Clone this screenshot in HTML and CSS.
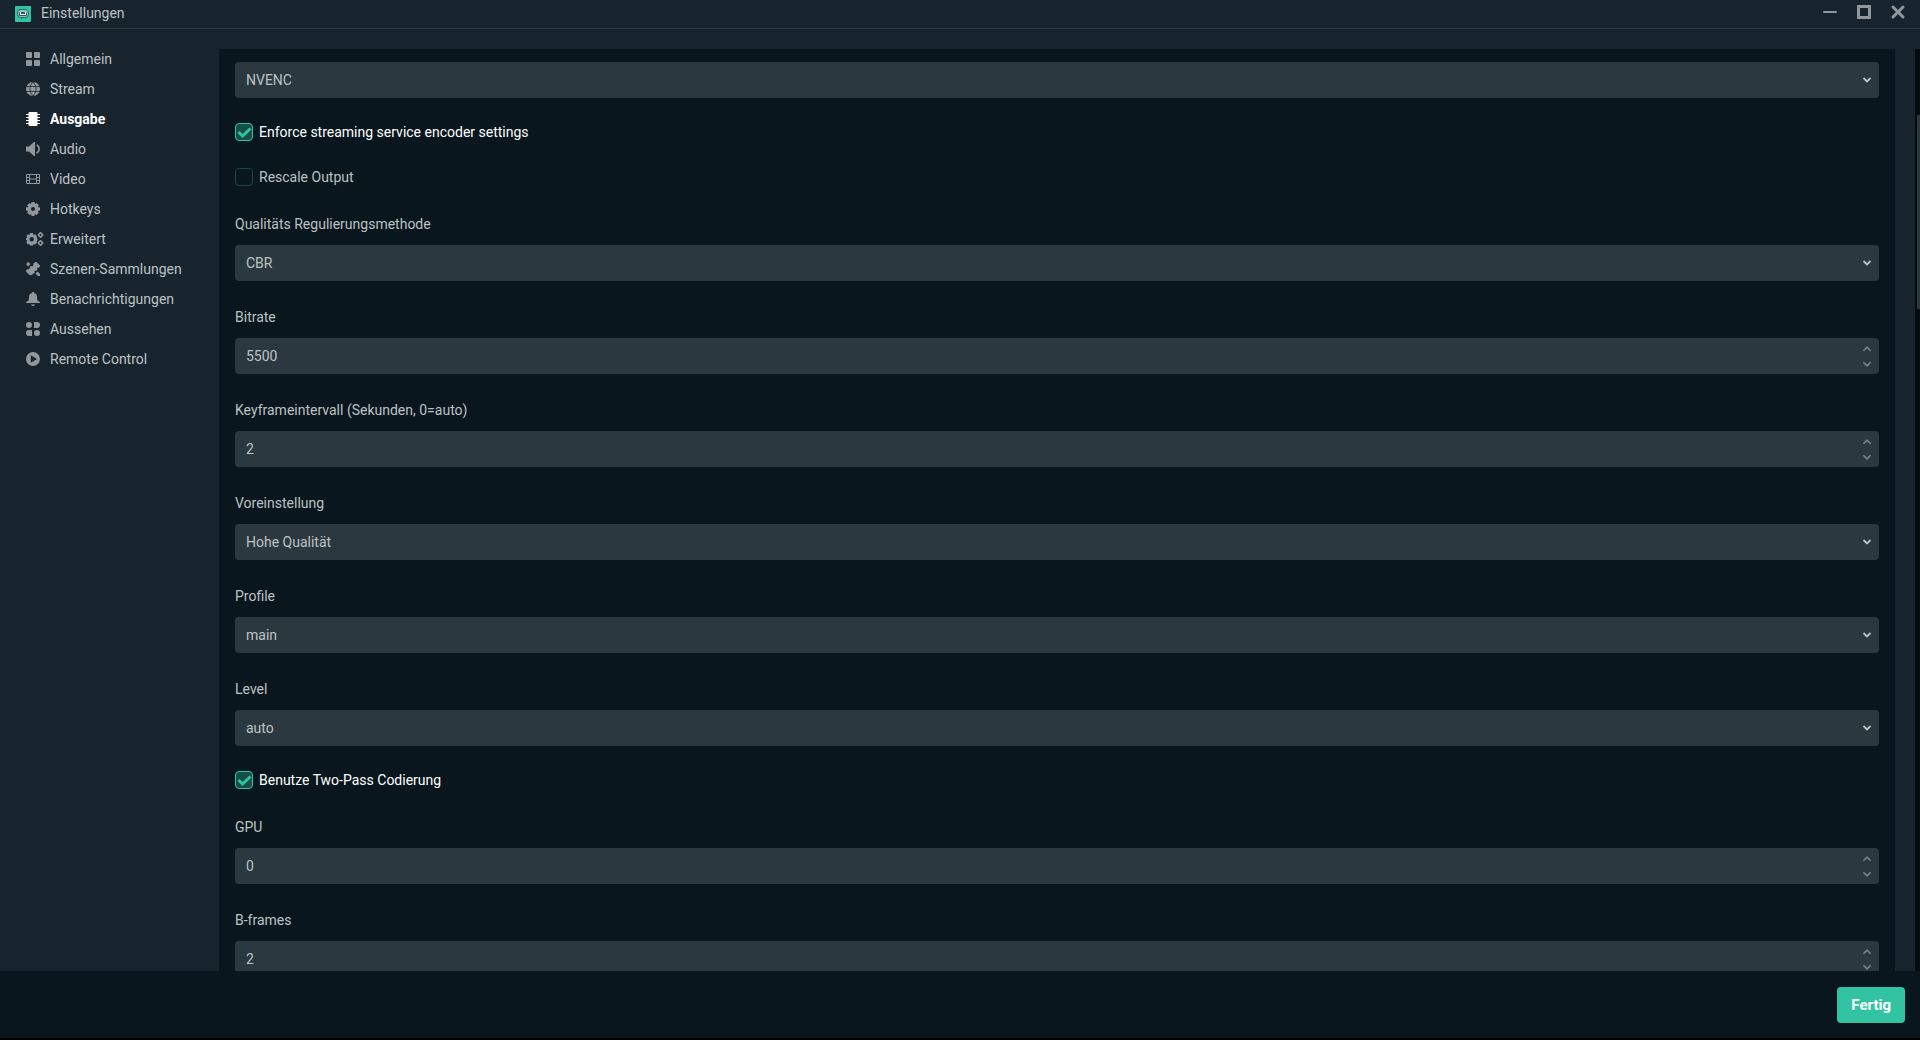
FILE: index.html
```html
<!DOCTYPE html>
<html lang="de">
  <head>
    <meta charset="UTF-8">
    <meta name="viewport" content="width=device-width,initial-scale=1">
    <title>Einstellungen</title>
    <link rel="stylesheet" href="styles.css">
  </head>
  <body>

    <header class="titlebar">
      <svg class="logo" viewBox="0 0 16 16">
        <rect width="16" height="16" rx="1" fill="#31c3a2"/>
        <path d="M5 3h6q3 1 3 4.500t-3 4.500H8l-2 1.500V12q-4-.5-4-4.500T5 3z" fill="#2a6f6c"/>
        <rect x="3" y="4" width="10" height="7" rx="3" fill="#8fc4c0"/>
        <rect x="4" y="6" width="8" height="4" rx="1" fill="#2a5960"/>
        <path d="M5 6h1v2H5zM10 6h1v2h-1zM5 8h6v1H5z" fill="#fff"/>
      </svg>
      <h1 class="title">Einstellungen</h1>
      <div class="window-buttons">
        <button type="button" aria-label="Minimieren"><svg viewBox="0 0 16 16"><path d="M2 8h12" stroke-width="2" stroke-linecap="round"/></svg></button>
        <button type="button" aria-label="Maximieren"><svg viewBox="0 0 16 16"><path d="M2.500 2.500h11v11h-11z" stroke-width="3"/></svg></button>
        <button type="button" aria-label="Schließen"><svg viewBox="0 0 16 16"><path d="M3 3l10 10M13 3L3 13" stroke-width="3" stroke-linecap="round"/></svg></button>
      </div>
    </header>

    <div class="settings">
      <nav class="sidebar">
        <a href="#">
          <svg viewBox="0 0 14 14"><rect width="6" height="6" rx="1"/><rect x="8" width="6" height="6" rx="1"/><rect y="8" width="6" height="6" rx="1"/><rect x="8" y="8" width="6" height="6" rx="1"/></svg>
          Allgemein
        </a>
        <a href="#">
          <svg viewBox="0 0 14 14"><circle cx="7" cy="7" r="7"/><path class="cut" d="M0 4.500h14M0 9.500h14M7 0C3 4 3 10 7 14M7 0c4 4 4 10 0 14"/></svg>
          Stream
        </a>
        <a href="#" class="active">
          <svg viewBox="0 0 14 14"><rect x="2.500" width="9" height="14" rx="1"/><path d="M0 2h3v1H0zM0 5h3v1H0zM0 8h3v1H0zM0 11h3v1H0zM11 2h3v1h-3zM11 5h3v1h-3zM11 8h3v1h-3zM11 11h3v1h-3z"/></svg>
          Ausgabe
        </a>
        <a href="#">
          <svg viewBox="0 0 14 14"><path d="M0 4.500h3L8 0h1v14H8L3 9.500H0z"/><path class="line" d="M10.500 3q2.600.8 2.600 4t-2.600 4"/></svg>
          Audio
        </a>
        <a href="#">
          <svg viewBox="0 0 14 14"><path class="line thin" d="M.5 2.500h13v9H.5zM3.500 2.500v9M10.500 2.500v9M3.500 7h7M.5 5.500h3M.5 8.500h3M10.500 5.500h3M10.500 8.500h3"/></svg>
          Video
        </a>
        <a href="#">
          <svg viewBox="0 0 14 14"><path fill-rule="evenodd" d="M5.500 0h3l.4 2 1.700-1.100 2.300 2.300L11.800 5l2.200.5v3l-2.200.5 1.100 1.800-2.300 2.300-1.700-1.100-.4 2h-3l-.4-2-1.700 1.100-2.300-2.300L2.200 9 0 8.500v-3L2.200 5 1.100 3.200 3.400.9 5.100 2zM7 5a2 2 0 100 4 2 2 0 000-4z"/></svg>
          Hotkeys
        </a>
        <a href="#">
          <svg class="wide" viewBox="0 0 18 14"><path fill-rule="evenodd" d="M4 1h3l.5 2L9 2.300 11.200 4.500 10.500 6l1 .5v2l-1 .5.7 1.500L9 12.500 7.500 12 7 13.500H4L3.500 12l-1.700.5L.3 10 1.500 8.500 0 8V6l1.500-.5L.3 4 1.800 2.200l1.700.8zM5.700 5a2.200 2.200 0 100 4.400 2.200 2.200 0 000-4.400z"/><circle class="line" cx="14.500" cy="3" r="1.700"/><circle class="line" cx="14.500" cy="11" r="1.700"/><path class="line" d="M14.500 0v1M11.700 3h1M16.500 3h1M14.500 5v1M14.500 8v1M11.700 11h1M16.500 11h1M14.500 13v1"/></svg>
          Erweitert
        </a>
        <a href="#">
          <svg viewBox="0 0 14 14"><path d="M9.500 0h1L14 3.500v1L12.500 6l-1-.5-.5 1 .5 1-1.500 1.500-1-.5-.5 1 .5 1L5.500 13h-2L0 9.500v-1L1.500 7l1 .5L4 6l-.5-1L5 4l1.500.5L7.500 3 7 2zM0 2l2-2 2.500 2L2 4.500zM9.500 11.500l2-2L14 12v2h-2z"/></svg>
          Szenen-Sammlungen
        </a>
        <a href="#">
          <svg viewBox="0 0 14 14"><path d="M6 0h2v1q3 .7 3 4 0 3 1 4l2 1v1H0v-1l2-1q1-1 1-4 0-3.300 3-4zM5 12.500h4Q8.500 14 7 14t-2-1.500z"/></svg>
          Benachrichtigungen
        </a>
        <a href="#">
          <svg viewBox="0 0 14 14"><circle cx="3" cy="3" r="3"/><path d="M8 0h3q3 0 3 3t-3 3H8zM3 8h3v6H3q-3 0-3-3t3-3z"/><circle cx="11" cy="11" r="3"/></svg>
          Aussehen
        </a>
        <a href="#">
          <svg viewBox="0 0 14 14"><path fill-rule="evenodd" d="M7 0a7 7 0 100 14A7 7 0 007 0zM4.800 3.300L11 7l-6.200 3.700z"/></svg>
          Remote Control
        </a>
      </nav>

      <main class="content">
        <form class="form">
          <select aria-label="Encoder"><option>NVENC</option></select>

          <label class="check"><input type="checkbox" checked><span>Enforce streaming service encoder settings</span></label>
          <label class="check"><input type="checkbox"><span>Rescale Output</span></label>

          <div class="field">
            <label for="rate-control">Qualitäts Regulierungsmethode</label>
            <select id="rate-control"><option>CBR</option></select>
          </div>

          <div class="field">
            <label for="bitrate">Bitrate</label>
            <div class="number">
              <input type="text" id="bitrate" value="5500">
              <div class="arrows">
                <button type="button" aria-label="Mehr"><svg viewBox="0 0 8 5"><path d="M1 4l3-3 3 3"/></svg></button>
                <button type="button" aria-label="Weniger"><svg viewBox="0 0 8 5"><path d="M1 1l3 3 3-3"/></svg></button>
              </div>
            </div>
          </div>

          <div class="field">
            <label for="keyframe">Keyframeintervall (Sekunden, 0=auto)</label>
            <div class="number">
              <input type="text" id="keyframe" value="2">
              <div class="arrows">
                <button type="button" aria-label="Mehr"><svg viewBox="0 0 8 5"><path d="M1 4l3-3 3 3"/></svg></button>
                <button type="button" aria-label="Weniger"><svg viewBox="0 0 8 5"><path d="M1 1l3 3 3-3"/></svg></button>
              </div>
            </div>
          </div>

          <div class="field">
            <label for="preset">Voreinstellung</label>
            <select id="preset"><option>Hohe Qualität</option></select>
          </div>

          <div class="field">
            <label for="profile">Profile</label>
            <select id="profile"><option>main</option></select>
          </div>

          <div class="field">
            <label for="level">Level</label>
            <select id="level"><option>auto</option></select>
          </div>

          <label class="check"><input type="checkbox" checked><span>Benutze Two-Pass Codierung</span></label>

          <div class="field">
            <label for="gpu">GPU</label>
            <div class="number">
              <input type="text" id="gpu" value="0">
              <div class="arrows">
                <button type="button" aria-label="Mehr"><svg viewBox="0 0 8 5"><path d="M1 4l3-3 3 3"/></svg></button>
                <button type="button" aria-label="Weniger"><svg viewBox="0 0 8 5"><path d="M1 1l3 3 3-3"/></svg></button>
              </div>
            </div>
          </div>

          <div class="field">
            <label for="bframes">B-frames</label>
            <div class="number">
              <input type="text" id="bframes" value="2">
              <div class="arrows">
                <button type="button" aria-label="Mehr"><svg viewBox="0 0 8 5"><path d="M1 4l3-3 3 3"/></svg></button>
                <button type="button" aria-label="Weniger"><svg viewBox="0 0 8 5"><path d="M1 1l3 3 3-3"/></svg></button>
              </div>
            </div>
          </div>
        </form>
      </main>

      <div class="scrollbar"><div class="thumb"></div></div>
    </div>

    <footer class="footer">
      <button type="button" class="done">Fertig</button>
    </footer>

  </body>
</html>
```
FILE: styles.css
```css
* {
  box-sizing: border-box;
}

body {
  margin: 0;
  height: 100vh;
  display: flex;
  flex-direction: column;
  background-color: #17242d;
  color: #bdc2c4;
  font-family: Roboto, Arial, sans-serif;
  font-size: 14px;
  overflow: hidden;
}

button, input, select {
  font: inherit;
  color: inherit;
}

button {
  border: none;
  padding: 0;
  background: none;
  cursor: pointer;
}

svg {
  display: block;
}

/* Title bar */
.titlebar {
  display: flex;
  flex: none;
  align-items: center;
  height: 29px;
  padding: 0 14px 0 15px;
  border-bottom: 1px solid #2b383f;
}

.logo {
  width: 16px;
  height: 16px;
}

.title {
  flex: 1;
  margin: 0 0 2px 10px;
  font-size: 14px;
  font-weight: 400;
}

.window-buttons {
  display: flex;
  gap: 18px;
  margin-bottom: 4px;
}

.window-buttons svg {
  width: 16px;
  height: 16px;
  fill: none;
  stroke: #91979a;
}

/* Middle part: menu, form and scrollbar */
.settings {
  display: flex;
  flex: 1;
  min-height: 0;
}

.sidebar {
  flex: none;
  width: 219px;
  padding-top: 15px;
}

.sidebar a {
  display: flex;
  align-items: center;
  gap: 10px;
  height: 30px;
  padding-left: 26px;
  color: inherit;
  text-decoration: none;
}

.sidebar a:hover,
.sidebar .active {
  color: #fff;
}

.sidebar .active {
  font-weight: 700;
}

.sidebar svg {
  width: 14px;
  height: 14px;
  fill: #91979a;
}

.sidebar .wide {
  width: 18px;
  margin-right: -4px;
}

.sidebar .active svg {
  fill: #fff;
}

.sidebar .line {
  fill: none;
  stroke: #91979a;
  stroke-width: 1.5;
}

.sidebar .thin {
  stroke-width: 1;
}

.sidebar .cut {
  fill: none;
  stroke: #17242d;
  stroke-width: 0.8;
}

.content {
  flex: 1;
  margin-top: 20px;
  padding: 13px 16px;
  background-color: #09161d;
  overflow-y: auto;
  scrollbar-width: none;
}

.scrollbar {
  flex: none;
  width: 5px;
  margin: 20px 0 0 20px;
  padding: 66px 0 0 2px;
  background-color: #040c12;
}

.thumb {
  height: 194px;
  background-color: #2b383f;
}

/* Form */
.form {
  display: flex;
  flex-direction: column;
  gap: 24px;
}

.field label {
  display: block;
  margin-bottom: 9px;
  line-height: 24px;
}

select {
  display: block;
  width: 100%;
  height: 36px;
  padding: 0 30px 0 11px;
  border: none;
  border-radius: 4px;
  appearance: none;
  background: #2b383f url("data:image/svg+xml,%3Csvg xmlns='http://www.w3.org/2000/svg' viewBox='0 0 10 6'%3E%3Cpath d='M1.500 1L5 4.500 8.500 1' fill='none' stroke='%23bdc2c4' stroke-width='1.800'/%3E%3C/svg%3E") no-repeat right 7px center / 10px 6px;
}

.number {
  display: flex;
  height: 36px;
  border-radius: 4px;
  background-color: #2b383f;
}

.number input {
  flex: 1;
  min-width: 0;
  padding: 0 11px;
  border: none;
  background: none;
}

.arrows {
  display: flex;
  flex-direction: column;
  justify-content: center;
  gap: 9px;
  padding: 0 7px;
}

.arrows svg {
  width: 10px;
  height: 6px;
  fill: none;
  stroke: #7b8488;
  stroke-width: 1.3;
}

.check {
  display: flex;
  gap: 6px;
  align-self: flex-start;
  padding: 1px 0 2px;
  line-height: 18px;
}

.check input {
  width: 18px;
  height: 18px;
  margin: 0;
  border: 1px solid #1a4544;
  border-radius: 4px;
  appearance: none;
}

.check input:checked {
  border-color: #31c3a2;
  background: #155048 url("data:image/svg+xml,%3Csvg xmlns='http://www.w3.org/2000/svg' viewBox='0 0 16 16'%3E%3Cpath d='M2.500 8l4 4 8-7.500' fill='none' stroke='%2331c3a2' stroke-width='3'/%3E%3C/svg%3E") no-repeat center / 16px 16px;
}

.check input:checked + span {
  color: #fff;
}

/* Footer */
.footer {
  display: flex;
  flex: none;
  justify-content: flex-end;
  padding: 16px 15px 15px;
  border-bottom: 2px solid #000;
  background-color: #09161d;
}

.done {
  height: 36px;
  padding: 0 14px;
  border-radius: 4px;
  background-color: #31c3a2;
  color: #fff;
  font-size: 15px;
  font-weight: 700;
}

.done:hover {
  opacity: 0.9;
}
```
